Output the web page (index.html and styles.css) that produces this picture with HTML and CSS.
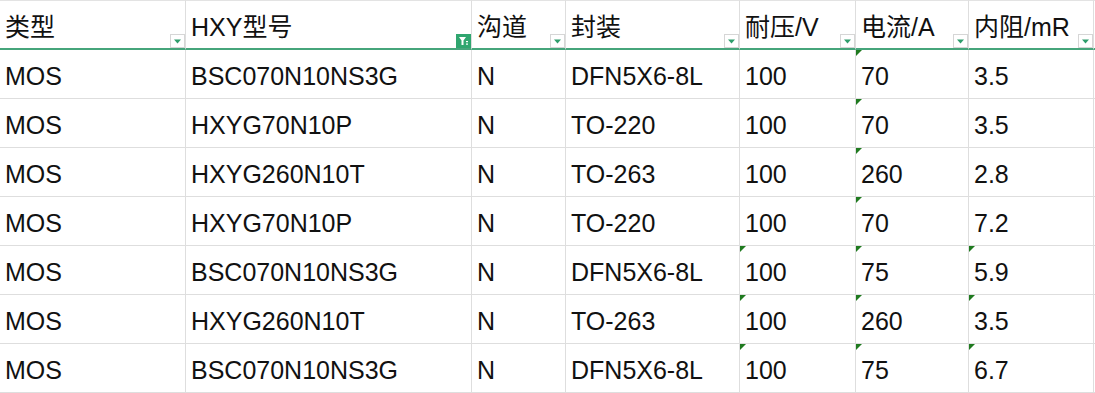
FILE: index.html
```html
<!DOCTYPE html>
<html lang="zh-CN">
<head>
<meta charset="utf-8">
<title>Sheet</title>
<link rel="stylesheet" href="styles.css">
</head>
<body>
<div class="sheet">
  <div class="cell head">类型<span class="flt"><svg viewBox="0 0 15 14" width="15" height="14"><path d="M4 5.5 L11 5.5 L7.5 9.5 Z" fill="#2f9d6c"/></svg></span></div>
  <div class="cell head">HXY型号<span class="flt on"><svg viewBox="0 0 15 14" width="15" height="14"><path d="M3 3 H10 L7.5 6.5 V11 H5.5 V6.5 Z" fill="#fff"/><rect x="10" y="7" width="2" height="1.2" fill="#fff"/><rect x="10" y="9.5" width="2" height="1.2" fill="#fff"/></svg></span></div>
  <div class="cell head">沟道<span class="flt"><svg viewBox="0 0 15 14" width="15" height="14"><path d="M4 5.5 L11 5.5 L7.5 9.5 Z" fill="#2f9d6c"/></svg></span></div>
  <div class="cell head">封装<span class="flt"><svg viewBox="0 0 15 14" width="15" height="14"><path d="M4 5.5 L11 5.5 L7.5 9.5 Z" fill="#2f9d6c"/></svg></span></div>
  <div class="cell head">耐压/V<span class="flt"><svg viewBox="0 0 15 14" width="15" height="14"><path d="M4 5.5 L11 5.5 L7.5 9.5 Z" fill="#2f9d6c"/></svg></span></div>
  <div class="cell head">电流/A<span class="flt"><svg viewBox="0 0 15 14" width="15" height="14"><path d="M4 5.5 L11 5.5 L7.5 9.5 Z" fill="#2f9d6c"/></svg></span></div>
  <div class="cell head">内阻/mR<span class="flt"><svg viewBox="0 0 15 14" width="15" height="14"><path d="M4 5.5 L11 5.5 L7.5 9.5 Z" fill="#2f9d6c"/></svg></span></div>
  <div class="cell head"></div>

  <div class="cell">MOS</div><div class="cell">BSC070N10NS3G</div><div class="cell">N</div><div class="cell">DFN5X6-8L</div><div class="cell">100</div><div class="cell warn">70</div><div class="cell">3.5</div><div class="cell"></div>
  <div class="cell">MOS</div><div class="cell">HXYG70N10P</div><div class="cell">N</div><div class="cell">TO-220</div><div class="cell">100</div><div class="cell warn">70</div><div class="cell">3.5</div><div class="cell"></div>
  <div class="cell">MOS</div><div class="cell">HXYG260N10T</div><div class="cell">N</div><div class="cell">TO-263</div><div class="cell">100</div><div class="cell warn">260</div><div class="cell">2.8</div><div class="cell"></div>
  <div class="cell">MOS</div><div class="cell">HXYG70N10P</div><div class="cell">N</div><div class="cell">TO-220</div><div class="cell">100</div><div class="cell warn">70</div><div class="cell">7.2</div><div class="cell"></div>
  <div class="cell">MOS</div><div class="cell">BSC070N10NS3G</div><div class="cell">N</div><div class="cell">DFN5X6-8L</div><div class="cell warn">100</div><div class="cell warn">75</div><div class="cell warn">5.9</div><div class="cell"></div>
  <div class="cell">MOS</div><div class="cell">HXYG260N10T</div><div class="cell">N</div><div class="cell">TO-263</div><div class="cell warn">100</div><div class="cell warn">260</div><div class="cell warn">3.5</div><div class="cell"></div>
  <div class="cell">MOS</div><div class="cell">BSC070N10NS3G</div><div class="cell">N</div><div class="cell">DFN5X6-8L</div><div class="cell warn">100</div><div class="cell warn">75</div><div class="cell warn">6.7</div><div class="cell"></div>
</div>
</body>
</html>
```

FILE: styles.css
```css
html, body {
  margin: 0;
  padding: 0;
  background: #ffffff;
}

body {
  font-family: "Liberation Sans", "Noto Sans CJK SC", sans-serif;
  font-size: 25px;
  color: #111111;
  overflow: hidden;
}

.sheet {
  display: grid;
  grid-template-columns: 186px 286px 94px 174px 116px 113px 125px 1fr;
  grid-template-rows: 50px;
  grid-auto-rows: 49px;
}

.cell {
  position: relative;
  box-sizing: border-box;
  border-right: 1px solid #dedede;
  border-bottom: 1px solid #dedede;
  padding: 12px 0 0 5px;
  line-height: 28px;
  white-space: nowrap;
  overflow: hidden;
}

.cell.head {
  height: 50px;
  border-top: 1px solid #e3e3e3;
  border-bottom: 2px solid #46a57b;
  padding-top: 12px;
}

.flt {
  position: absolute;
  right: 0;
  bottom: 0;
  width: 15px;
  height: 14px;
  box-sizing: border-box;
  border: 1px solid #d6d6d6;
  background: #ffffff;
}

.flt svg {
  position: absolute;
  left: -1px;
  top: -1px;
}

.flt.on {
  background: #2fa66f;
  border-color: #2fa66f;
}

.warn::before {
  content: "";
  position: absolute;
  left: 0;
  top: 0;
  width: 6px;
  height: 6px;
  background: #1f7a1f;
  clip-path: polygon(0 0, 100% 0, 0 100%);
}
```
